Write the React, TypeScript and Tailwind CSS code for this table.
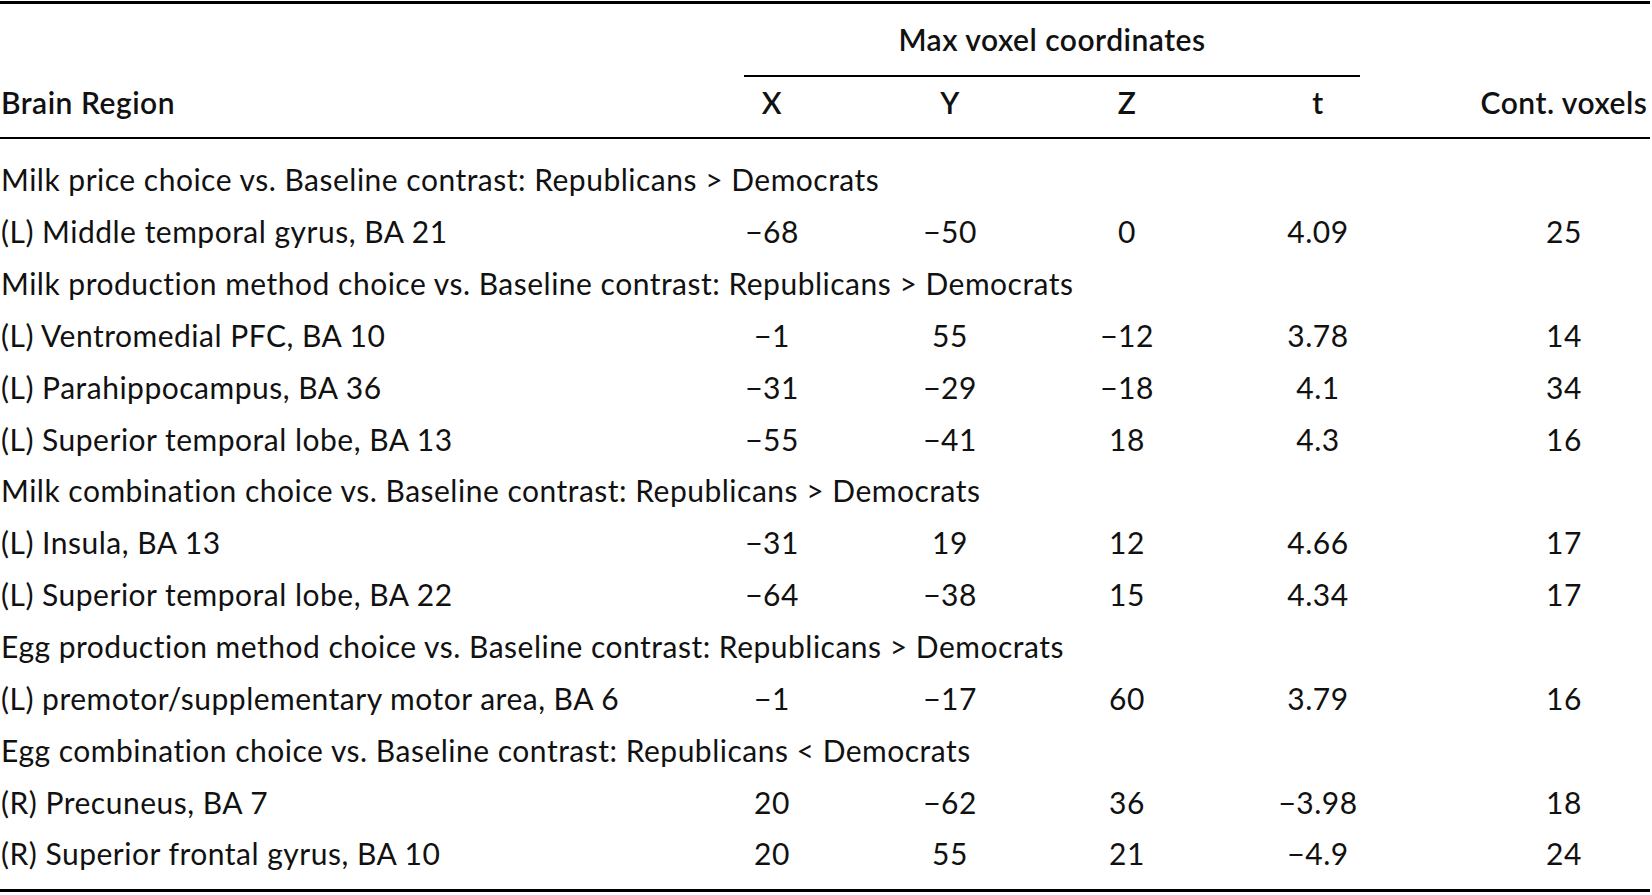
import React from "react";

type Row =
  | { kind: "group"; label: string }
  | { kind: "data"; region: string; x: string; y: string; z: string; t: string; voxels: string };

const rows: Row[] = [
  { kind: "group", label: "Milk price choice vs. Baseline contrast: Republicans > Democrats" },
  { kind: "data", region: "(L) Middle temporal gyrus, BA 21", x: "−68", y: "−50", z: "0", t: "4.09", voxels: "25" },
  { kind: "group", label: "Milk production method choice vs. Baseline contrast: Republicans > Democrats" },
  { kind: "data", region: "(L) Ventromedial PFC, BA 10", x: "−1", y: "55", z: "−12", t: "3.78", voxels: "14" },
  { kind: "data", region: "(L) Parahippocampus, BA 36", x: "−31", y: "−29", z: "−18", t: "4.1", voxels: "34" },
  { kind: "data", region: "(L) Superior temporal lobe, BA 13", x: "−55", y: "−41", z: "18", t: "4.3", voxels: "16" },
  { kind: "group", label: "Milk combination choice vs. Baseline contrast: Republicans > Democrats" },
  { kind: "data", region: "(L) Insula, BA 13", x: "−31", y: "19", z: "12", t: "4.66", voxels: "17" },
  { kind: "data", region: "(L) Superior temporal lobe, BA 22", x: "−64", y: "−38", z: "15", t: "4.34", voxels: "17" },
  { kind: "group", label: "Egg production method choice vs. Baseline contrast: Republicans > Democrats" },
  { kind: "data", region: "(L) premotor/supplementary motor area, BA 6", x: "−1", y: "−17", z: "60", t: "3.79", voxels: "16" },
  { kind: "group", label: "Egg combination choice vs. Baseline contrast: Republicans < Democrats" },
  { kind: "data", region: "(R) Precuneus, BA 7", x: "20", y: "−62", z: "36", t: "−3.98", voxels: "18" },
  { kind: "data", region: "(R) Superior frontal gyrus, BA 10", x: "20", y: "55", z: "21", t: "−4.9", voxels: "24" },
];

const cols = "grid grid-cols-[683px_178px_178px_176px_206px_1fr]";

const App = () => {
  return (
    <div className="w-[1650px] bg-white pt-px text-[#111] font-['Lato',sans-serif] text-[30px] tracking-[0.5px]">
      <div className="border-t-[3px] border-b-[3px] border-black">
        {/* column group header */}
        <div className={cols}>
          <div className="col-start-2 col-span-4">
            <div className="h-[71px] flex items-center justify-center font-semibold">
              Max voxel coordinates
            </div>
            <div className="mx-[61px] h-[2px] bg-black" />
          </div>
        </div>

        {/* column headers */}
        <div className={`${cols} h-[62px] border-b-2 border-black font-semibold leading-[36px] pt-[7px]`}>
          <div className="pl-px">Brain Region</div>
          <div className="text-center">X</div>
          <div className="text-center">Y</div>
          <div className="text-center">Z</div>
          <div className="text-center">t</div>
          <div className="pl-[57px] text-center">Cont. voxels</div>
        </div>

        {/* body */}
        <div className="pt-[15px] pb-[9px]">
          {rows.map((r, i) =>
            r.kind === "group" ? (
              <div key={i} className="h-[51.85px] flex items-center pl-px">
                {r.label}
              </div>
            ) : (
              <div key={i} className={`${cols} h-[51.85px] items-center`}>
                <div className="pl-px">{r.region}</div>
                <div className="text-center">{r.x}</div>
                <div className="text-center">{r.y}</div>
                <div className="text-center">{r.z}</div>
                <div className="text-center">{r.t}</div>
                <div className="pl-[57px] text-center">{r.voxels}</div>
              </div>
            )
          )}
        </div>
      </div>
    </div>
  );
};

export default App;
